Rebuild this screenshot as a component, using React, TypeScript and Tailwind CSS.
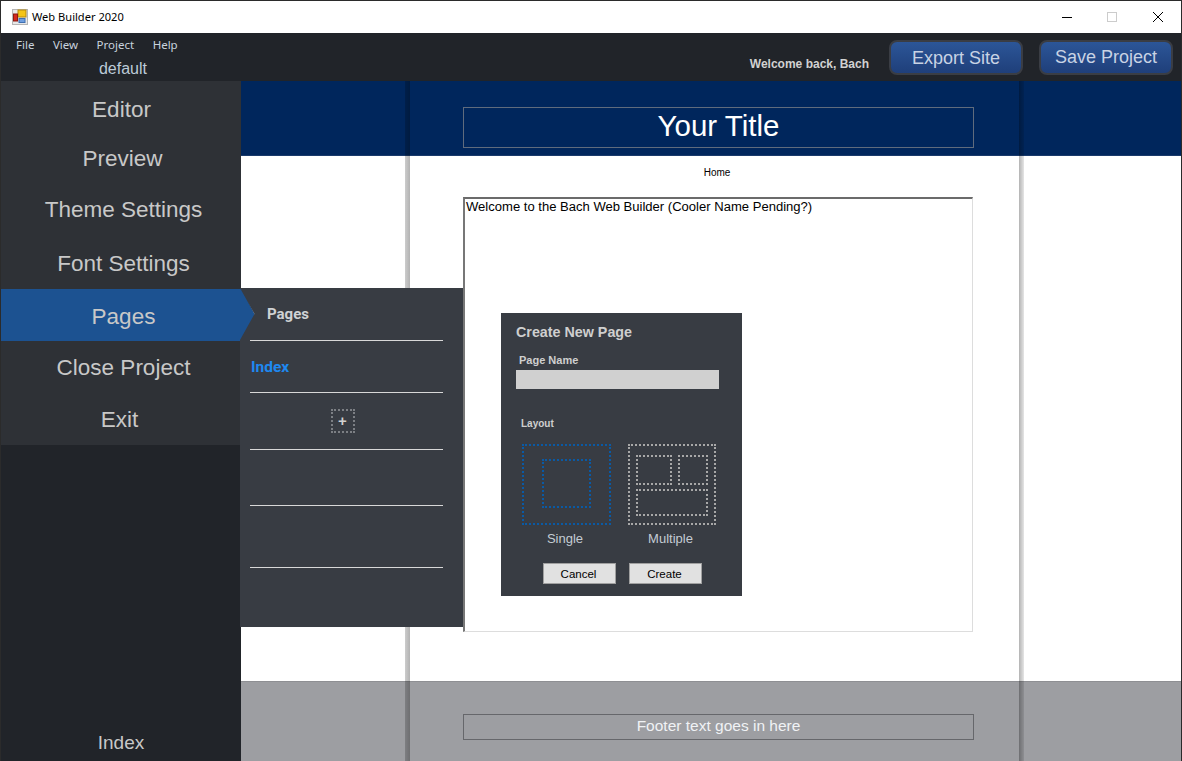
import React from 'react';

const sideItems = [
  { label: 'Editor', box: 'h-[52px] pt-[6px]', shift: '-translate-x-[2px]' },
  { label: 'Preview', box: 'h-[50px] pt-[2px]', shift: '-translate-x-[1px]' },
  { label: 'Theme Settings', box: 'h-[53px]', shift: '' },
  { label: 'Font Settings', box: 'h-[53px] pt-[2px]', shift: '' },
  { label: 'Pages', box: 'h-[52px] pt-[4px]', shift: '', active: true },
  { label: 'Close Project', box: 'h-[52px] pt-[2px]', shift: '' },
  { label: 'Exit', box: 'h-[52px] pt-[2px]', shift: '-translate-x-[4px]' },
];

const AppIcon = () => (
  <svg width="16" height="16" viewBox="0 0 16 16">
    <rect x="0.5" y="0.5" width="15" height="15" fill="#e8e8e8" stroke="#b5b5b5" />
    <rect x="6" y="1" width="8" height="7" fill="#f5c518" stroke="#b58a10" />
    <rect x="1.5" y="5" width="4" height="7" fill="#d42a1e" stroke="#8c1a12" />
    <rect x="7" y="9.5" width="6" height="4" fill="#6f9fe0" stroke="#3f6fb0" />
  </svg>
);

const App: React.FC = () => {
  return (
    <div className="relative flex h-[761px] w-[1182px] flex-col overflow-hidden border-x border-t border-[#2b2b2b] bg-[#212429] font-['Liberation_Sans',sans-serif]">
      {/* Title bar */}
      <div className="flex h-[32px] shrink-0 items-center bg-white pl-[11px] text-black">
        <AppIcon />
        <span className="ml-[4px] font-['Noto_Sans',sans-serif] text-[11.1px]">Web Builder 2020</span>
        <div className="ml-auto flex items-center">
          <svg width="103" height="12" viewBox="0 0 103 12" className="mr-[17px]">
            <line x1="1" y1="6.5" x2="11" y2="6.5" stroke="#000" />
            <rect x="46.5" y="1.5" width="9" height="9" fill="none" stroke="#ccc" />
            <path d="M92 1 L102 11 M102 1 L92 11" stroke="#000" />
          </svg>
        </div>
      </div>

      {/* Menu bar */}
      <div className="flex h-[48px] shrink-0 bg-[#212429]">
        <div className="w-[240px] shrink-0">
          <div className="flex h-[24px] items-center gap-[18.5px] pl-[15px] font-['Noto_Sans',sans-serif] text-[11.5px] text-[#c9d3de]">
            <span>File</span>
            <span>View</span>
            <span>Project</span>
            <span>Help</span>
          </div>
          <div className="mt-[1px] pl-[4px] text-center text-[16px] leading-[22px] text-[#bccbd8]">default</div>
        </div>
        <div className="ml-auto flex items-start pt-[7px] pr-[8px]">
          <span className="mt-[15px] mr-[20px] text-[12px] font-bold text-[#d2d2d2]">Welcome back, Bach</span>
          <button className="h-[35px] w-[134px] rounded-lg border-2 border-[#3a3d44] bg-gradient-to-b from-[#2c5698] to-[#1f3f7a] pt-[2px] text-[18px] text-[#c8d3e4]">
            Export Site
          </button>
          <button className="ml-[16px] h-[35px] w-[134px] rounded-lg border-2 border-[#3a3d44] bg-gradient-to-b from-[#2c5698] to-[#1f3f7a] text-[18px] text-[#c8d3e4]">
            Save Project
          </button>
        </div>
      </div>

      <div className="flex min-h-0 flex-1">
        {/* Sidebar */}
        <div className="flex w-[240px] shrink-0 flex-col bg-[#212429]">
          <div className="bg-[#2e3136]">
            {sideItems.map((item) => (
              <div
                key={item.label}
                className={`flex ${item.box} items-center justify-center pl-[5px] text-[22.5px] text-[#c8c8c8] ${item.active ? 'bg-[#1c5291]' : ''}`}
              >
                <span className={item.shift}>{item.label}</span>
              </div>
            ))}
          </div>
          <div className="mt-auto pb-[4px] text-center text-[19px] text-[#c8c8c8]">Index</div>
        </div>

        {/* Canvas */}
        <div className="flex min-w-0 flex-1 flex-col bg-white">
          <div className="h-[75px] shrink-0 border-b border-[#1a3a6b] bg-[#00265c] pt-[26px] pl-[222px]">
            <div className="flex h-[41px] w-[511px] items-center justify-center border border-[#5f6b7d] pb-[3px] text-[29.5px] text-white">
              Your Title
            </div>
          </div>
          <div className="flex flex-1 flex-col pl-[222px]">
            <div className="w-[510px] pt-[11px] pb-[19px] pr-[2px] text-center text-[10px] leading-[11px] text-black">Home</div>
            <div className="h-[435px] w-[510px] border-t-2 border-l-2 border-r border-b border-t-[#6b6b6b] border-l-[#777] border-r-[#ddd] border-b-[#ddd] pl-[1px] text-[13.05px] leading-[16px] text-black">
              Welcome to the Bach Web Builder (Cooler Name Pending?)
            </div>
          </div>
          <div className="h-[80px] shrink-0 border-t border-[#8e8f93] bg-[#9d9ea2] pt-[32px] pl-[222px]">
            <div className="flex h-[26px] w-[511px] items-center justify-center border border-[#66676b] pb-[3px] text-[15.5px] text-[#f0f2f5]">
              Footer text goes in here
            </div>
          </div>
        </div>
      </div>

      {/* Page column shadows */}
      <div className="absolute top-[80px] bottom-0 left-[404px] w-[5px] bg-gradient-to-r from-black/20 to-black/30" />
      <div className="absolute top-[80px] bottom-0 left-[1018px] w-[5px] bg-gradient-to-r from-black/30 to-black/10" />

      {/* Pages arrow */}
      <div className="absolute top-[288px] left-[239px] h-[52px] w-[15px] bg-[#1c5291] [clip-path:polygon(0_0,15%_0,100%_50%,15%_100%,0_100%)]" />

      {/* Pages panel */}
      <div className="absolute top-[287px] left-[239px] h-[339px] w-[223px] bg-[#383c43] [clip-path:polygon(0_0,100%_0,100%_100%,0_100%,0_52px,6.5%_26px,0_0)]">
        <div className="ml-[10px] w-[193px]">
          <div className="flex h-[53px] items-center border-b border-[#d8d8d8] pl-[17px] font-['Roboto',sans-serif] text-[15px] font-bold text-[#cfd2d4]">
            Pages
          </div>
          <div className="flex h-[52px] items-center border-b border-[#d8d8d8] pt-[2px] pl-[1px] font-['Roboto',sans-serif] text-[15.5px] font-bold text-[#1e88f0]">
            Index
          </div>
          <div className="flex h-[57px] items-center justify-center border-b border-[#d8d8d8] pr-[8px] pb-[1px]">
            <div className="flex h-[24px] w-[24px] items-center justify-center border-2 border-dotted border-[#7c7f84] text-[15px] leading-none font-bold text-[#d0d0d0]">
              +
            </div>
          </div>
          <div className="h-[56px] border-b border-[#d8d8d8]" />
          <div className="h-[62px] border-b border-[#d8d8d8]" />
        </div>
      </div>

      {/* Create page dialog */}
      <div className="absolute top-[312px] left-[500px] flex h-[283px] w-[241px] flex-col bg-[#383c43] px-[15px] text-[#cfcfcf]">
        <div className="pt-[11px] text-[14.3px] leading-[17px] font-bold">Create New Page</div>
        <div className="pt-[13px] pl-[3px] text-[11px] leading-[13px] font-bold">Page Name</div>
        <div className="mt-[3px] h-[19px] w-[203px] bg-[#d0d0d0]" />
        <div className="pt-[28px] pl-[5px] text-[10px] leading-[13px] font-bold">Layout</div>
        <div className="mt-[14px] ml-[6px] flex gap-[17px]">
          <div className="w-[89px]">
            <div className="flex h-[81px] items-center justify-center border-2 border-dotted border-[#0a5aa5] pb-[2px]">
              <div className="h-[49px] w-[49px] border-2 border-dotted border-[#0a5aa5]" />
            </div>
            <div className="pt-[6px] pr-[3px] text-center text-[13px] leading-[16px] text-[#c4ccd4]">Single</div>
          </div>
          <div className="w-[88px]">
            <div className="grid h-[81px] grid-cols-[36px_30px] grid-rows-[30px_27px] gap-x-[6px] gap-y-[4px] border-2 border-dotted border-[#a8a8a8] pt-[9px] pl-[6px]">
              <div className="border-2 border-dotted border-[#a8a8a8]" />
              <div className="border-2 border-dotted border-[#a8a8a8]" />
              <div className="col-span-2 border-2 border-dotted border-[#a8a8a8]" />
            </div>
            <div className="pt-[6px] pr-[3px] text-center text-[13px] leading-[16px] text-[#c4ccd4]">Multiple</div>
          </div>
        </div>
        <div className="mt-[16px] ml-[27px] flex gap-[13px]">
          <button className="h-[21px] w-[73px] border border-[#a0a0a0] bg-[#e1e1e1] pt-[2px] pr-[2px] text-[11.5px] text-black">Cancel</button>
          <button className="h-[21px] w-[73px] border border-[#a0a0a0] bg-[#e1e1e1] pt-[2px] pr-[2px] text-[11.5px] text-black">Create</button>
        </div>
      </div>
    </div>
  );
};

export default App;
